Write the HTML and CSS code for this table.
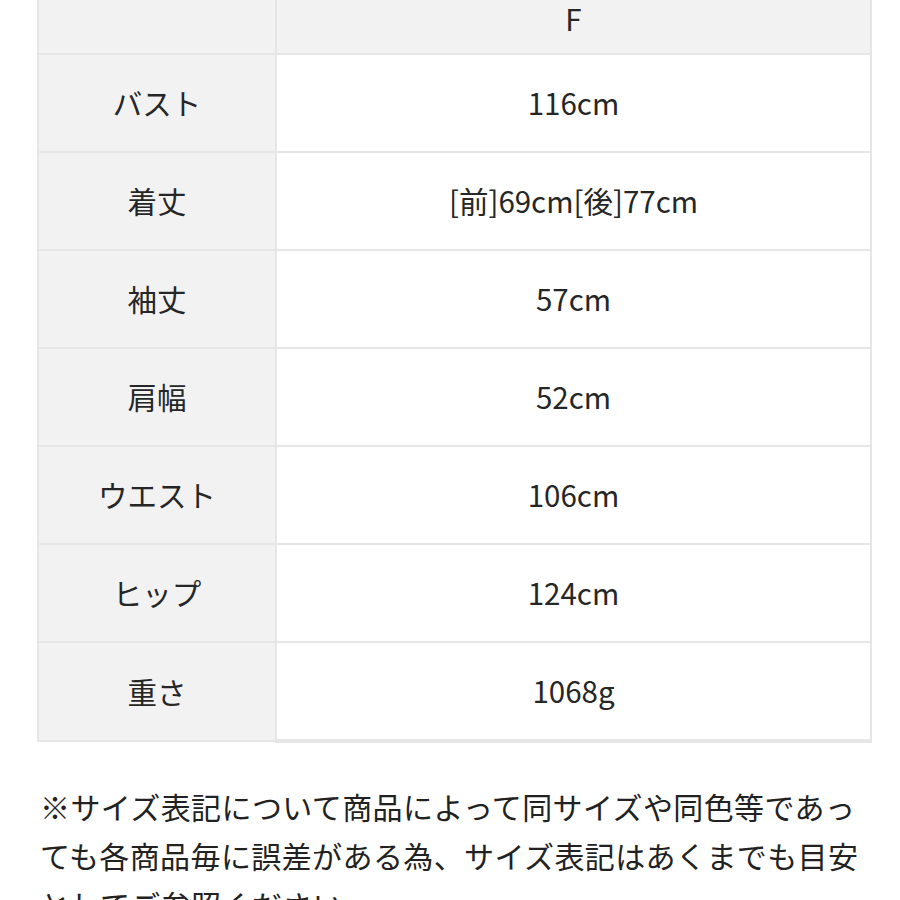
FILE: index.html
```html
<!DOCTYPE html>
<html lang="ja">
<head>
<meta charset="utf-8">
<link rel="stylesheet" href="styles.css">
</head>
<body>
<div class="page">
  <table class="size">
    <tr class="head"><th class="lbl"></th><td class="val">F</td></tr>
    <tr><th class="lbl">バスト</th><td class="val">116cm</td></tr>
    <tr><th class="lbl">着丈</th><td class="val">[前]69cm[後]77cm</td></tr>
    <tr><th class="lbl">袖丈</th><td class="val">57cm</td></tr>
    <tr><th class="lbl">肩幅</th><td class="val">52cm</td></tr>
    <tr><th class="lbl">ウエスト</th><td class="val">106cm</td></tr>
    <tr><th class="lbl">ヒップ</th><td class="val">124cm</td></tr>
    <tr><th class="lbl">重さ</th><td class="val">1068g</td></tr>
  </table>
  <p class="note">※サイズ表記について商品によって同サイズや同色等であっても各商品毎に誤差がある為、サイズ表記はあくまでも目安としてご参照ください。</p>
</div>
</body>
</html>
```
FILE: styles.css
```css
html, body {
  margin: 0;
  padding: 0;
  background: #fff;
}
body {
  font-family: "Noto Sans CJK JP", "Noto Sans", sans-serif;
  color: #262626;
  overflow: hidden;
}
.page {
  padding: 0 28px 0 37px;
  margin-top: -15px;
}
.size {
  width: 835px;
  border-collapse: collapse;
  table-layout: fixed;
}
.size th, .size td {
  height: 96px;
  padding: 0;
  border: 2px solid #e6e6e6;
  text-align: center;
  vertical-align: middle;
  font-size: 29.5px;
  font-weight: 400;
  line-height: 1.2;
}
.size .head th, .size .head td {
  height: 68px;
  border-top: 0;
}
.size .lbl {
  width: 236px;
  background: #f2f2f2;
}
.size .head .val {
  background: #f2f2f2;
}
.size .val {
  background: #fff;
}
.size tr:last-child .val {
  border-bottom-width: 4px;
}
.note {
  margin: 39px 0 0 3px;
  font-size: 30px;
  line-height: 49px;
  color: #222;
  letter-spacing: 0.4px;
}
```
